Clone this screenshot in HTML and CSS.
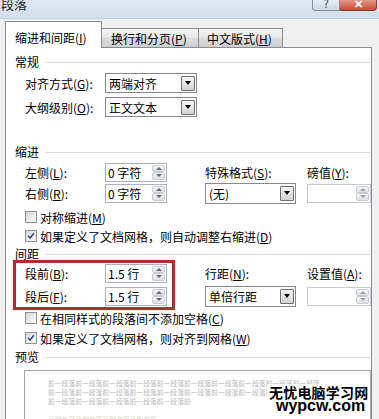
FILE: index.html
```html
<!DOCTYPE html>
<html lang="zh-CN">
<head>
    <meta charset="UTF-8">
    <title>段落</title>
    <link rel="stylesheet" href="styles.css">
</head>
<body>
<div class="dialog">
    <div class="titlebar">
        <span class="title">段落</span>
        <div class="caption-btns">
            <span class="btn-help">?</span>
            <span class="btn-close">✕</span>
        </div>
    </div>

    <div class="tabs">
        <div class="tab active">缩进和间距(<u>I</u>)</div>
        <div class="tab tab-break">换行和分页(<u>P</u>)</div>
        <div class="tab tab-cn">中文版式(<u>H</u>)</div>
    </div>

    <div class="panel">
        <div class="group-title">常规</div>
        <div class="row first-row">
            <span class="label">对齐方式(<u>G</u>):</span>
            <div class="select sel-wide"><span class="sel-text">两端对齐</span><span class="drop"></span></div>
        </div>
        <div class="row">
            <span class="label">大纲级别(<u>O</u>):</span>
            <div class="select sel-wide"><span class="sel-text">正文文本</span><span class="drop"></span></div>
        </div>

        <div class="group-title indent-title">缩进</div>
        <div class="grid indent-grid">
            <span class="label">左侧(<u>L</u>):</span>
            <div class="cell"><div class="spin"><span class="val">0 字符</span><span class="arrows"><span class="arr up"></span><span class="arr down"></span></span></div></div>
            <span class="label">特殊格式(<u>S</u>):</span>
            <span class="label">磅值(<u>Y</u>):</span>

            <span class="label">右侧(<u>R</u>):</span>
            <div class="cell"><div class="spin"><span class="val">0 字符</span><span class="arrows"><span class="arr up"></span><span class="arr down"></span></span></div></div>
            <div class="cell"><div class="select sel-mid"><span class="sel-text">(无)</span><span class="drop"></span></div></div>
            <div class="cell"><div class="spin spin-right disabled"><span class="val"></span><span class="arrows"><span class="arr up"></span><span class="arr down"></span></span></div></div>
        </div>

        <div class="check check-first"><span class="cb"></span>对称缩进(<u>M</u>)</div>
        <div class="check"><span class="cb"><svg viewBox="0 0 12 12"><path d="M2.5 5.8 L4.9 8.4 L9.4 2.8" fill="none" stroke="#2e4787" stroke-width="1.8"/></svg></span>如果定义了文档网格，则自动调整右缩进(<u>D</u>)</div>

        <div class="group-title spacing-title">间距</div>
        <div class="grid spacing-grid">
            <span class="label">段前(<u>B</u>):</span>
            <div class="cell"><div class="spin"><span class="val">1.5 行</span><span class="arrows"><span class="arr up"></span><span class="arr down"></span></span></div></div>
            <span class="label">行距(<u>N</u>):</span>
            <span class="label">设置值(<u>A</u>):</span>

            <span class="label">段后(<u>F</u>):</span>
            <div class="cell"><div class="spin"><span class="val">1.5 行</span><span class="arrows"><span class="arr up"></span><span class="arr down"></span></span></div></div>
            <div class="cell"><div class="select sel-mid"><span class="sel-text">单倍行距</span><span class="drop"></span></div></div>
            <div class="cell"><div class="spin spin-right disabled"><span class="val"></span><span class="arrows"><span class="arr up"></span><span class="arr down"></span></span></div></div>
        </div>

        <div class="check check-gap"><span class="cb"></span>在相同样式的段落间不添加空格(<u>C</u>)</div>
        <div class="check check-gap"><span class="cb"><svg viewBox="0 0 12 12"><path d="M2.5 5.8 L4.9 8.4 L9.4 2.8" fill="none" stroke="#2e4787" stroke-width="1.8"/></svg></span>如果定义了文档网格，则对齐到网格(<u>W</u>)</div>

        <div class="group-title preview-title">预览</div>
        <div class="preview">
            <div class="pv-line">前一段落前一段落前一段落前一段落前一段落前一段落前一段落前一段落前一段落前一段落</div>
            <div class="pv-line">前一段落前一段落前一段落前一段落前一段落前一段落前一段落前一段落前一段</div>
            <div class="pv-line">前一段落前一段落前一段落前一段落前一段落前</div>
            <div class="pv-line pv-sample">示例文字示例文字示例文字示例文字</div>
            <div class="watermark">
                <div class="wm-cn">无忧电脑学习网</div>
                <div class="wm-en">wypcw.com</div>
            </div>
        </div>

        <div class="highlight"></div>
    </div>
</div>
</body>
</html>
```

FILE: styles.css
```css
* {
    box-sizing: border-box;
}

body {
    margin: 0;
    font-family: "Noto Sans CJK SC", "Noto Sans", sans-serif;
    font-size: 12px;
    color: #000;
    background: #f0f0f0;
}

u {
    text-decoration: underline;
    text-underline-offset: 1px;
}

.dialog {
    width: 379px;
    height: 419px;
    overflow: hidden;
    background: #f0f0f0;
}

/* title bar */
.titlebar {
    height: 19px;
    display: flex;
    align-items: flex-start;
    background: linear-gradient(#dfe8f2, #d4dfec);
    border-bottom: 1px solid #c3d0df;
    overflow: hidden;
}

.title {
    font-size: 13px;
    line-height: 13px;
    margin: -3px 0 0 1px;
    color: #1e1e1e;
}

.caption-btns {
    display: flex;
    margin-left: auto;
    margin-right: 2px;
}

.btn-help,
.btn-close {
    height: 11px;
    border: 1px solid #7e8ea4;
    border-top: none;
    font-size: 11px;
    line-height: 6px;
    text-align: center;
    overflow: hidden;
}

.btn-help {
    width: 28px;
    border-radius: 0 0 0 4px;
    background: linear-gradient(#e8eef5, #cbd7e5);
    color: #3a4b63;
}

.btn-close {
    width: 37px;
    border-color: #8b3a2d;
    border-left: none;
    border-radius: 0 0 4px 0;
    background: linear-gradient(#e39a89, #c94a33);
    color: #fff;
    font-weight: bold;
}

/* tabs */
.tabs {
    display: flex;
    align-items: flex-end;
    height: 28px;
    padding-left: 5px;
    position: relative;
    z-index: 1;
}

.tab {
    height: 19px;
    border: 1px solid #898c95;
    border-bottom: none;
    padding: 4px 0 0 9px;
    line-height: 12px;
    background: linear-gradient(#f3f3f3 0%, #ebebeb 45%, #dcdcdc 50%, #cfcfcf 100%);
    white-space: nowrap;
}

.tab.active {
    width: 97px;
    height: 27px;
    margin-bottom: -1px;
    padding-top: 10px;
    background: #fff;
}

.tab-break {
    width: 97px;
    border-left: none;
}

.tab-cn {
    width: 84px;
    border-left: none;
    padding-left: 8px;
}

/* page */
.panel {
    position: relative;
    margin-left: 5px;
    width: 367px;
    height: 400px;
    border: 1px solid #898c95;
    background: #fff;
    padding: 8px 0 0 9px;
}

.group-title {
    display: flex;
    align-items: center;
    height: 12px;
    line-height: 12px;
}

.group-title::after {
    content: "";
    flex: 1;
    height: 1px;
    margin: 0 1px 0 6px;
    background: #d8dde3;
}

.indent-title {
    margin-top: 29px;
}

.spacing-title {
    margin-top: 4px;
}

.preview-title {
    margin-top: 5px;
}

.row {
    display: flex;
    align-items: center;
    height: 20px;
    margin-top: 4px;
    padding-left: 10px;
}

.first-row {
    margin-top: 5px;
}

.label {
    display: flex;
    align-items: center;
    white-space: nowrap;
}

.row .label {
    width: 80px;
}

.grid {
    display: grid;
    grid-template-columns: 80px 100px 102px 64px;
    grid-auto-rows: 20px;
    padding-left: 10px;
}

.indent-grid {
    margin-top: 4px;
    row-gap: 1px;
}

.spacing-grid {
    margin-top: 3px;
    row-gap: 3px;
}

.cell {
    display: flex;
    align-items: center;
}

/* combo box */
.select {
    display: flex;
    align-items: center;
    height: 20px;
    border: 1px solid #848890;
    background: #fff;
    padding: 0 1px 0 3px;
}

.sel-wide {
    width: 92px;
}

.sel-mid {
    width: 91px;
    height: 21px;
}

.sel-text {
    flex: 1;
    white-space: nowrap;
}

.drop {
    width: 14px;
    height: 15px;
    border: 1px solid #6f6f6f;
    border-radius: 1px;
    background: linear-gradient(#f4f4f4, #d3d3d3);
    display: flex;
    align-items: center;
    justify-content: center;
}

.drop::after {
    content: "";
    border-left: 3.5px solid transparent;
    border-right: 3.5px solid transparent;
    border-top: 4px solid #000;
}

/* spin box */
.spin {
    display: flex;
    width: 62px;
    height: 19px;
    border: 1px solid #acb0b8;
    background: #fff;
}

.spin-right {
    width: 64px;
}

.spin .val {
    flex: 1;
    padding-left: 2px;
    line-height: 17px;
    white-space: nowrap;
}

.arrows {
    width: 14px;
    display: flex;
    flex-direction: column;
    padding: 1px 1px 1px 0;
}

.arr {
    flex: 1;
    display: flex;
    align-items: center;
    justify-content: center;
    border: 1px solid #c9cdd3;
    border-radius: 2px;
    background: linear-gradient(#f6f6f6, #dcdfe3);
}

.arr.up::after {
    content: "";
    border-left: 3px solid transparent;
    border-right: 3px solid transparent;
    border-bottom: 3px solid #5d6b80;
}

.arr.down::after {
    content: "";
    border-left: 3px solid transparent;
    border-right: 3px solid transparent;
    border-top: 3px solid #5d6b80;
}

.disabled {
    border-color: #c6c9ce;
}

.disabled .arr.up::after {
    border-bottom-color: #9aa3b0;
}

.disabled .arr.down::after {
    border-top-color: #9aa3b0;
}

/* check boxes */
.check {
    display: flex;
    align-items: center;
    height: 16px;
    margin-top: 3px;
    padding-left: 10px;
    white-space: nowrap;
}

.check-first {
    margin-top: 6px;
}

.check-gap {
    margin-top: 4px;
}

.cb {
    width: 12px;
    height: 12px;
    margin-right: 3px;
    border: 1px solid #8e8f8f;
    background: linear-gradient(135deg, #d9d9d9, #fbfbfb);
    flex-shrink: 0;
}

.cb svg {
    display: block;
    width: 10px;
    height: 10px;
}

/* preview */
.preview {
    position: relative;
    margin: 7px 0 0 9px;
    width: 347px;
    height: 60px;
    border: 1px solid #a5a5a5;
    background: #fff;
    padding: 8px 0 0 23px;
}

.pv-line {
    font-size: 6.8px;
    line-height: 9px;
    color: #b9b9b9;
    white-space: nowrap;
    overflow: hidden;
}

.pv-sample {
    margin-top: 9px;
    color: #d8d6c4;
}

.watermark {
    position: absolute;
    left: 242px;
    top: 13px;
    padding: 0 2px;
    background: #fff;
    white-space: nowrap;
}

.wm-cn {
    font-size: 14px;
    line-height: 16px;
    font-weight: bold;
    letter-spacing: 0.2px;
}

.wm-en {
    margin: -1px 0 0 7px;
    font-family: "Liberation Sans", Arial, sans-serif;
    font-size: 16px;
    line-height: 14px;
    font-weight: bold;
}

/* red annotation frame */
.highlight {
    position: absolute;
    left: 7px;
    top: 212px;
    width: 162px;
    height: 50px;
    border: 3px solid #a8302f;
    box-shadow: 0 0 1px rgba(150, 30, 30, 0.6);
}
```
